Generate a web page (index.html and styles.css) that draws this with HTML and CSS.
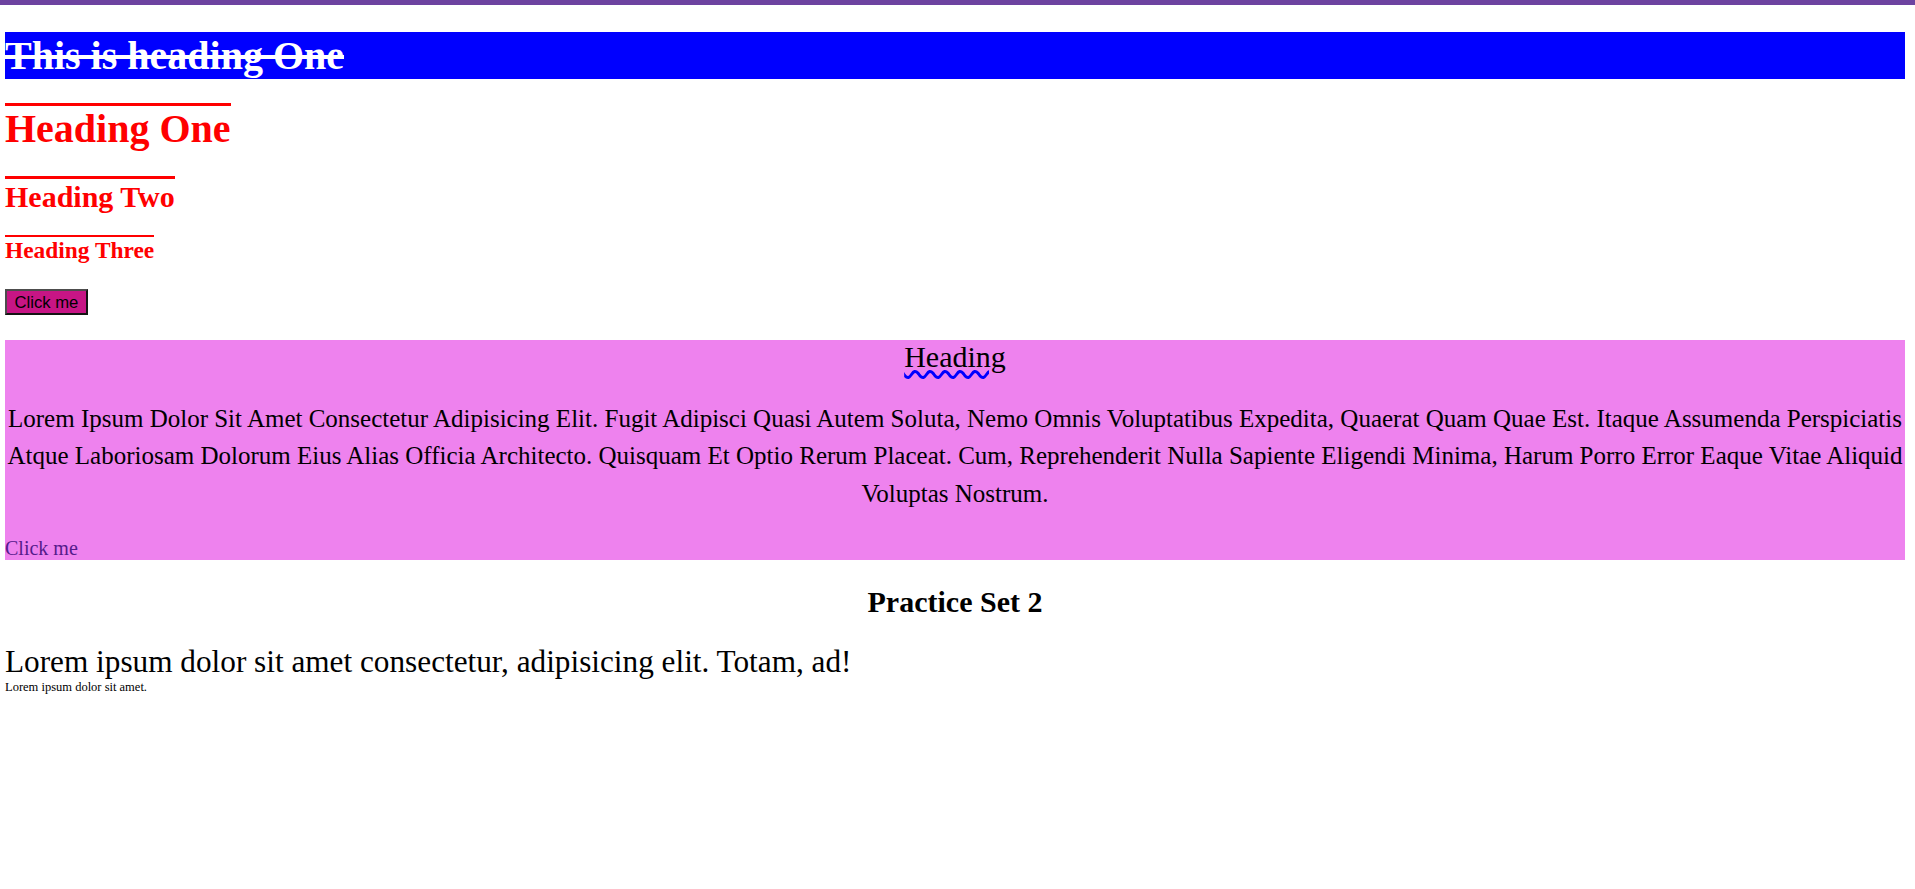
FILE: index.html
```html
<!DOCTYPE html>
<html lang="en">
<head>
<meta charset="utf-8">
<title>Practice</title>
<link rel="stylesheet" href="styles.css">
</head>
<body>
<div class="topbar"></div>
<main class="page">
  <h1 class="banner">This is heading One</h1>
  <h1 class="rule-heading h-one">Heading One</h1>
  <h2 class="rule-heading h-two">Heading Two</h2>
  <h3 class="rule-heading h-three">Heading Three</h3>
  <div class="btn-row">
    <button class="btn" type="button">Click me</button>
  </div>
  <section class="box">
    <div class="box-title">Heading</div>
    <p class="box-text">lorem ipsum dolor sit amet consectetur adipisicing elit. fugit adipisci quasi autem soluta, nemo omnis voluptatibus expedita, quaerat quam quae est. itaque assumenda perspiciatis atque laboriosam dolorum eius alias officia architecto. quisquam et optio rerum placeat. cum, reprehenderit nulla sapiente eligendi minima, harum porro error eaque vitae aliquid voluptas nostrum.</p>
    <a class="box-link" href="#">Click me</a>
  </section>
  <h2 class="set-title">Practice Set 2</h2>
  <p class="big-text">Lorem ipsum dolor sit amet consectetur, adipisicing elit. Totam, ad!</p>
  <p class="small-text">Lorem ipsum dolor sit amet.</p>
</main>
</body>
</html>
```
FILE: styles.css
```css
html, body {
  margin: 0;
  padding: 0;
  background: #ffffff;
}

body {
  font-family: "Liberation Serif", "Times New Roman", serif;
  color: #000000;
}

.topbar {
  height: 5px;
  background: #6d43a0;
}

.page {
  padding: 0 10px 0 5px;
  display: flow-root;
}

.banner {
  margin: 27px 0 0 0;
  font-size: 40px;
  line-height: 47px;
  font-weight: bold;
  color: #ffffff;
  background: #0000ff;
  text-decoration: line-through;
}

.rule-heading {
  color: #ff0000;
  font-weight: bold;
  width: fit-content;
  margin: 0;
}

.h-one {
  margin-top: 24px;
  font-size: 40px;
  line-height: 46px;
  border-top: 3px solid #ff0000;
}

.h-two {
  margin-top: 24px;
  font-size: 30px;
  line-height: 35px;
  border-top: 3px solid #ff0000;
}

.h-three {
  margin-top: 21px;
  font-size: 23.4px;
  line-height: 27px;
  border-top: 2px solid #ff0000;
}

.btn-row {
  display: flex;
  margin-top: 25px;
  margin-bottom: 25px;
}

.btn {
  font-family: "Liberation Sans", Arial, sans-serif;
  font-size: 16.67px;
  line-height: 19px;
  padding: 1.5px 7.5px;
  margin: 0;
  background: #c71585;
  color: #000000;
  border-style: solid;
  border-width: 2px;
  border-color: #4d4d4d #141414 #141414 #4d4d4d;
}

.box {
  background: #ee82ee;
  display: flow-root;
}

.box-title {
  text-align: center;
  font-size: 30px;
  line-height: 34.5px;
  text-decoration: underline wavy #0000ff;
  text-decoration-thickness: 3px;
  text-underline-offset: 3px;
}

.box-text {
  margin: 25px 0;
  text-align: center;
  font-size: 25px;
  line-height: 37.5px;
  text-transform: capitalize;
}

.box-link {
  display: block;
  font-size: 20px;
  line-height: 23px;
  color: #551a8b;
  text-decoration: none;
}

.set-title {
  margin: 25px 0 24px;
  text-align: center;
  font-size: 30px;
  line-height: 34.5px;
  font-weight: bold;
}

.big-text {
  margin: 0;
  font-size: 31.25px;
  line-height: 36px;
}

.small-text {
  margin: 0;
  font-size: 12.5px;
  line-height: 14.4px;
}
```
